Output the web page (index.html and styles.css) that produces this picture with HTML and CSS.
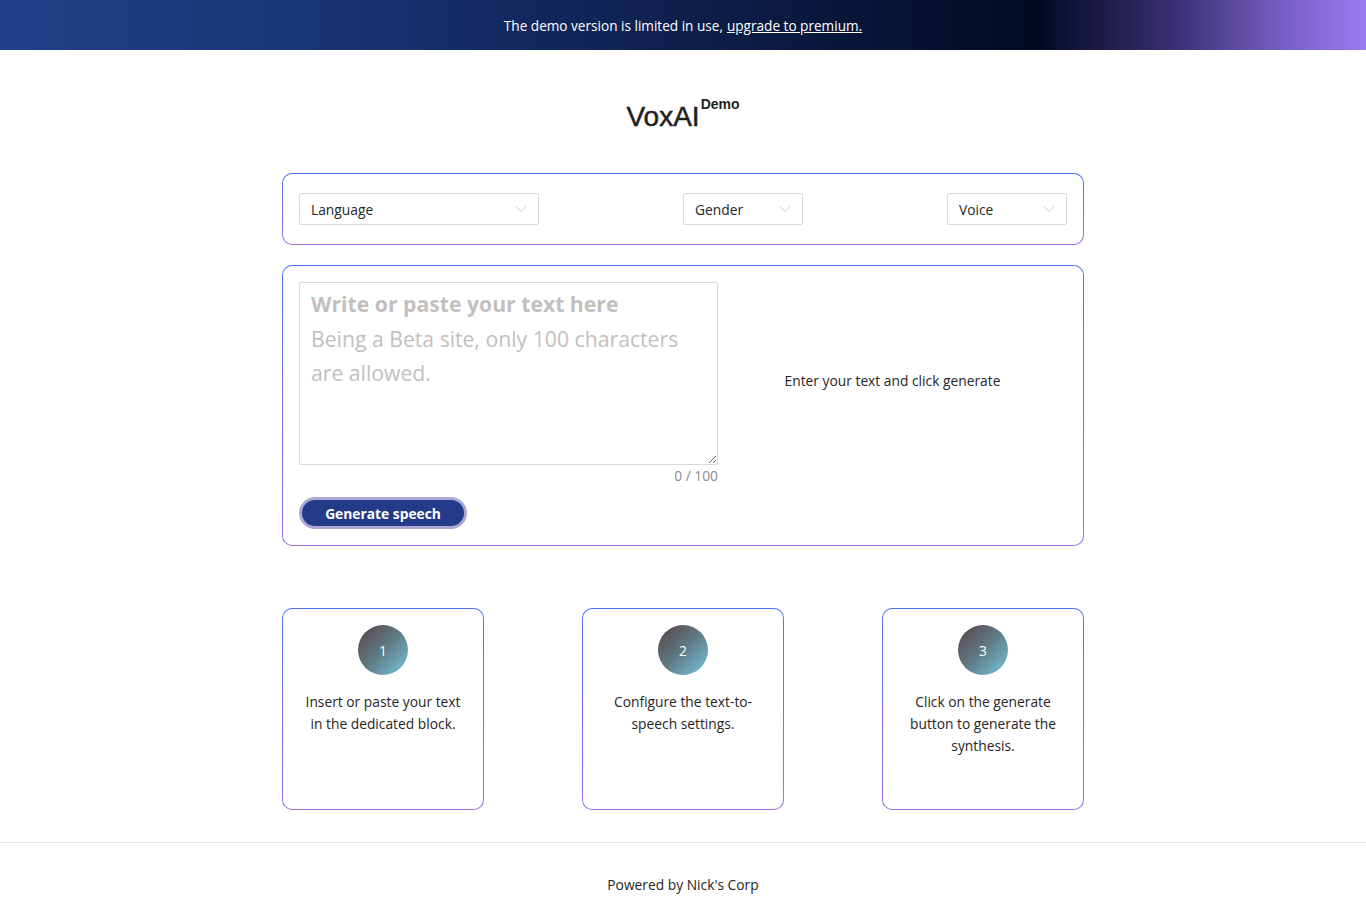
FILE: index.html
```html
<!DOCTYPE html>
<html lang="en">
<head>
<meta charset="utf-8">
<title>VoxAI Demo</title>
<link rel="stylesheet" href="styles.css">
</head>
<body>
<div class="banner">The demo version is limited in use, <a href="#" class="banner-link">upgrade to premium.</a></div>

<main class="page">
  <h1 class="title">VoxAI<span class="title-sup">Demo</span></h1>

  <section class="card settings">
    <div class="select select-lang"><span>Language</span><svg class="chev" viewBox="0 0 12 8" width="12" height="8"><path d="M1 1.5 L6 6.5 L11 1.5" fill="none" stroke="#c4c4c4" stroke-width="1"/></svg></div>
    <div class="select select-small"><span>Gender</span><svg class="chev" viewBox="0 0 12 8" width="12" height="8"><path d="M1 1.5 L6 6.5 L11 1.5" fill="none" stroke="#c4c4c4" stroke-width="1"/></svg></div>
    <div class="select select-small"><span>Voice</span><svg class="chev" viewBox="0 0 12 8" width="12" height="8"><path d="M1 1.5 L6 6.5 L11 1.5" fill="none" stroke="#c4c4c4" stroke-width="1"/></svg></div>
  </section>

  <section class="card editor">
    <div class="editor-row">
      <div class="editor-left">
        <div class="text-wrap">
          <textarea class="text-input" aria-label="Text"></textarea>
          <div class="placeholder">
            <div class="ph-title">Write or paste your text here</div>
            <div class="ph-body">Being a Beta site, only 100 characters are allowed.</div>
          </div>
        </div>
        <div class="counter">0 / 100</div>
      </div>
      <div class="editor-right">Enter your text and click generate</div>
    </div>
    <button class="gen-btn" type="button">Generate speech</button>
  </section>

  <section class="steps">
    <div class="card step">
      <div class="step-num">1</div>
      <p class="step-text">Insert or paste your text in the dedicated block.</p>
    </div>
    <div class="card step">
      <div class="step-num">2</div>
      <p class="step-text">Configure the text-to-speech settings.</p>
    </div>
    <div class="card step">
      <div class="step-num">3</div>
      <p class="step-text">Click on the generate button to generate the synthesis.</p>
    </div>
  </section>
</main>

<footer class="footer">Powered by Nick's Corp</footer>
</body>
</html>
```

FILE: styles.css
```css
* { box-sizing: border-box; }

html, body {
  margin: 0;
  padding: 0;
  background: #ffffff;
}

body {
  font-family: "Open Sans", "Noto Sans", sans-serif;
  font-size: 13.8px;
  color: #262626;
}

.banner {
  height: 50px;
  display: flex;
  align-items: center;
  justify-content: center;
  color: #ffffff;
  font-size: 13.6px;
  background: linear-gradient(90deg, #213f89 0%, #1a3575 22%, #0f2355 45%, #05112f 68%, #020a22 76%, #3a2f72 86%, #7660c4 94%, #9b7cf0 100%);
}

.banner-link {
  color: #ffffff;
  text-decoration: underline;
  margin-left: 4px;
}

.page {
  width: 802px;
  margin: 0 auto;
  padding-top: 47px;
}

.title {
  margin: 0 0 42px 0;
  text-align: center;
  font-family: "Liberation Sans", Arial, sans-serif;
  font-weight: normal;
  font-size: 28px;
  line-height: 34px;
  height: 34px;
  color: #1f1f1f;
  -webkit-text-stroke: 0.5px #1f1f1f;
}

.title-sup {
  font-size: 14px;
  font-weight: bold;
  line-height: 14px;
  vertical-align: 17px;
  margin-left: 1px;
  -webkit-text-stroke: 0;
}

.card {
  border: 1px solid transparent;
  border-radius: 10px;
  background:
    linear-gradient(#ffffff, #ffffff) padding-box,
    linear-gradient(180deg, #4f72f2 0%, #7a6ff0 60%, #a472e6 100%) border-box;
}

.settings {
  display: flex;
  justify-content: space-between;
  align-items: center;
  padding: 19px 16px;
}

.select {
  height: 32px;
  border: 1px solid #d9d9d9;
  border-radius: 2px;
  display: flex;
  align-items: center;
  justify-content: space-between;
  padding: 0 11px;
  color: #262626;
  background: #ffffff;
}

.select-lang { width: 240px; }
.select-small { width: 120px; }

.chev { display: block; }

.editor {
  margin-top: 20px;
  padding: 16px;
}

.editor-row {
  display: flex;
  align-items: center;
}

.editor-left {
  width: 419px;
  flex: none;
}

.text-wrap {
  position: relative;
  height: 183px;
}

.text-input {
  display: block;
  width: 100%;
  height: 183px;
  border: 1px solid #d9d9d9;
  border-radius: 2px;
  resize: vertical;
  outline: none;
  font-family: inherit;
  margin: 0;
}

.placeholder {
  position: absolute;
  left: 12px;
  top: 5px;
  right: 12px;
  pointer-events: none;
  color: #c2bfbe;
  font-size: 21.2px;
  line-height: 34.5px;
}

.ph-title { font-weight: bold; }

.counter {
  text-align: right;
  color: #8c8c8c;
  line-height: 20px;
  margin-top: 1px;
}

.editor-right {
  flex: 1;
  text-align: center;
  padding-bottom: 8px;
}

.gen-btn {
  display: block;
  margin-top: 11px;
  width: 168px;
  height: 32px;
  border: 3px solid #aaa7d5;
  border-radius: 16px;
  background: #243b89;
  color: #ffffff;
  font-family: inherit;
  font-weight: bold;
  font-size: 13.8px;
  padding: 0;
  cursor: pointer;
}

.steps {
  margin-top: 62px;
  display: flex;
  justify-content: space-between;
}

.step {
  width: 202px;
  height: 202px;
  display: flex;
  flex-direction: column;
  align-items: center;
  padding: 16px 20px 0;
}

.step-num {
  width: 50px;
  height: 50px;
  border-radius: 50%;
  background: linear-gradient(135deg, #5a3f42 0%, #5f7b86 50%, #76c8dc 100%);
  color: #ffffff;
  display: flex;
  align-items: center;
  justify-content: center;
}

.step-text {
  margin: 16px 0 0;
  text-align: center;
  line-height: 22px;
}

.footer {
  margin-top: 32px;
  border-top: 1px solid #e8e8e8;
  height: 78px;
  padding-top: 32px;
  text-align: center;
  line-height: 20px;
}
```
